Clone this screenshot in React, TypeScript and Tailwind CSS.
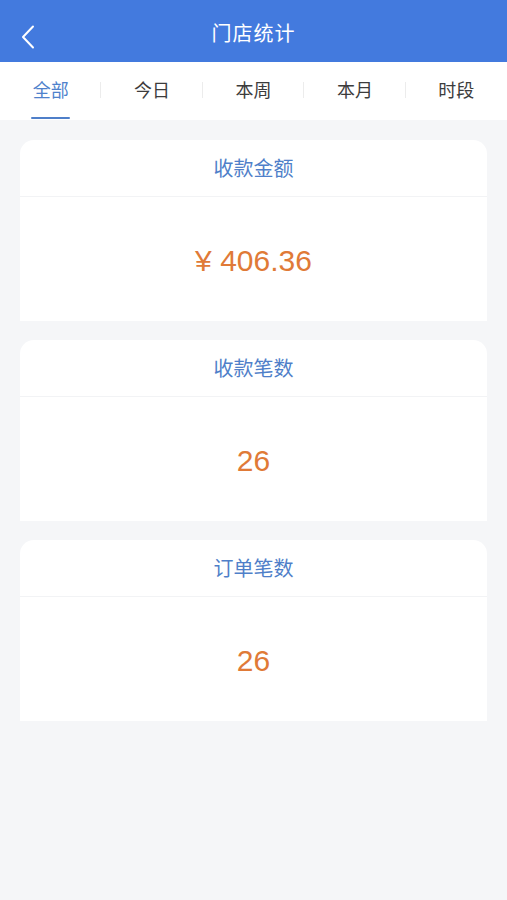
import { useState } from "react"

const TABS = ["全部", "今日", "本周", "本月", "时段"]

const STATS = [
    { title: "收款金额", value: "¥ 406.36" },
    { title: "收款笔数", value: "26" },
    { title: "订单笔数", value: "26" },
]

const StatCard = ({ title, value }: { title: string; value: string }) => {
    return (
        <div className="bg-white rounded-t-[14px] flex flex-col">
            <div className="h-[57px] flex items-center justify-center border-b border-[#f2f3f5]">
                <span className="text-[20px] text-[#4f7fc9]">{title}</span>
            </div>
            <div className="h-[124px] flex items-center justify-center pt-[2px]">
                <span
                    className="text-[30px] text-[#e07a37]"
                    style={{ fontFamily: '"Liberation Sans", Arial, sans-serif' }}
                >
                    {value}
                </span>
            </div>
        </div>
    )
}

export default function App() {
    const [active, setActive] = useState(0)

    return (
        <div
            className="w-[507px] h-[900px] bg-[#f5f6f8] flex flex-col"
            style={{ fontFamily: '"Noto Sans CJK SC", "Noto Sans", sans-serif' }}
        >
            <div className="h-[62px] bg-[#437ade] relative flex items-center justify-center pt-[3px]">
                <button className="absolute left-[16px] top-[21px] w-[24px] h-[32px] flex items-center justify-center">
                    <svg width="16" height="24" viewBox="0 0 16 24" fill="none">
                        <path d="M13 1.5 L3 12 L13 22.5" stroke="white" strokeWidth="2" strokeLinecap="round" strokeLinejoin="round" />
                    </svg>
                </button>
                <h1 className="text-[20px] text-white tracking-[1px]">门店统计</h1>
            </div>

            <div className="h-[58px] bg-white grid grid-cols-5">
                {TABS.map((tab, index) => (
                    <div
                        key={tab}
                        className="relative flex items-center justify-center pb-[4px] cursor-pointer"
                        onClick={() => setActive(index)}
                    >
                        <span className={`text-[18px] ${active === index ? "text-[#4f82cc]" : "text-[#3c3c3c]"}`}>
                            {tab}
                        </span>
                        {index < TABS.length - 1 && (
                            <span className="absolute right-0 top-[20px] h-[16px] w-px bg-[#ececec]" />
                        )}
                        {active === index && (
                            <span className="absolute bottom-[1px] w-[39px] h-[2px] rounded-full bg-[#4f7fc9]" />
                        )}
                    </div>
                ))}
            </div>

            <div className="flex flex-col gap-[19px] px-[20px] pt-[20px]">
                {STATS.map((stat) => (
                    <StatCard key={stat.title} title={stat.title} value={stat.value} />
                ))}
            </div>
        </div>
    )
}
